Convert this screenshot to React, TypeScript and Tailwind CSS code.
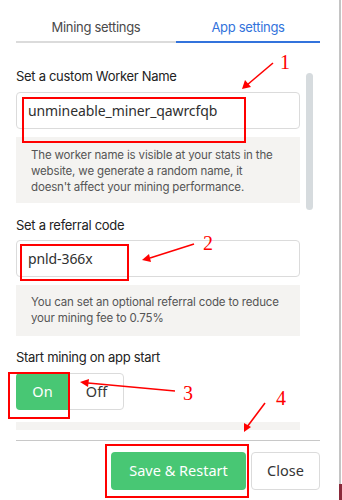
import { Fragment } from "react";

const labelFont = { fontFamily: "Inter, 'Noto Sans', sans-serif" };

const Label = ({ text, className }: { text: string; className: string }) => (
  <div className={`text-[13px] leading-[20px] tracking-[-0.3px] text-[#222] ${className}`}>
    {text}
  </div>
);

const Field = ({ value, className }: { value: string; className: string }) => (
  <div
    className={`h-[37px] rounded-[4px] border border-[#dbdbdb] bg-white flex items-center pl-[11px] text-[14px] tracking-[-0.1px] text-[#2f2f2f] font-['Noto_Sans',sans-serif] ${className}`}
  >
    {value}
  </div>
);

const Help = ({ lines, className }: { lines: string[]; className: string }) => (
  <div
    className={`bg-[#f4f3f1] pl-[15px] pr-1 text-[11.5px] leading-[16px] tracking-[-0.15px] whitespace-nowrap text-[#555] ${className}`}
  >
    {lines.map((l, i) => (
      <Fragment key={i}>
        {l}
        {i < lines.length - 1 && <br />}
      </Fragment>
    ))}
  </div>
);

const Annotations = () => (
  <div className="absolute inset-0 pointer-events-none">
    <div className="absolute left-[22px] top-[97px] w-[224px] h-[46px] border-2 border-[#ff0000]" />
    <div className="absolute left-[20px] top-[244px] w-[109px] h-[37px] border-2 border-[#ff0000]" />
    <div className="absolute left-[8px] top-[372px] w-[62px] h-[47px] border-2 border-[#ff0000]" />
    <div className="absolute left-[105px] top-[444px] w-[144px] h-[54px] border-2 border-[#ff0000]" />
    <svg className="absolute inset-0" width="342" height="500">
      <g stroke="#ff0000" strokeWidth="1.6" fill="#ff0000">
        <line x1="273" y1="63" x2="247" y2="85" />
        <polygon points="242,89 245,80 251,87" stroke="none" />
        <line x1="194" y1="244" x2="150" y2="258" />
        <polygon points="142,260 149,254 151,262" stroke="none" />
        <line x1="175" y1="391" x2="88" y2="383" />
        <polygon points="80,382 89,379 88,387" stroke="none" />
        <line x1="265" y1="403" x2="247" y2="427" />
        <polygon points="244,432 244,423 251,427" stroke="none" />
      </g>
    </svg>
    <div className="absolute text-[#ff0000] text-[20px] leading-none font-['Liberation_Serif',serif]">
      <span className="absolute left-[280px] top-[52px]">1</span>
      <span className="absolute left-[203px] top-[233px]">2</span>
      <span className="absolute left-[183px] top-[383px]">3</span>
      <span className="absolute left-[276px] top-[388px]">4</span>
    </div>
  </div>
);

export default function App() {
  return (
    <div className="relative w-[342px] h-[500px] bg-white overflow-hidden">
      <div className="w-[341px] h-full border-r-2 border-[#c4c4c4] flex flex-col pl-4" style={labelFont}>
        {/* tabs */}
        <div className="flex w-[304px] mt-[14px] text-[13px] tracking-[-0.3px]">
          <div className="w-[160px] h-[29px] flex items-center justify-center border-b-2 border-[#dbdbdb] text-[#4a4a4a]">
            Mining settings
          </div>
          <div className="flex-1 h-[29px] flex items-center justify-center border-b-2 border-[#3273dc] text-[#3273dc]">
            App settings
          </div>
        </div>

        {/* scroll area */}
        <div className="flex h-[387px] overflow-hidden">
          <div className="w-[284px] flex flex-col">
            <Label text="Set a custom Worker Name" className="mt-[23px]" />
            <Field value="unmineable_miner_qawrcfqb" className="mt-[6px]" />
            <Help
              className="mt-[8px] py-[10px] h-[66px]"
              lines={[
                "The worker name is visible at your stats in the",
                "website, we generate a random name, it",
                "doesn't affect your mining performance.",
              ]}
            />
            <Label text="Set a referral code" className="mt-[12px]" />
            <Field value="pnld-366x" className="mt-[5px]" />
            <Help
              className="mt-[8px] py-[9px] h-[51px]"
              lines={[
                "You can set an optional referral code to reduce",
                "your mining fee to 0.75%",
              ]}
            />
            <Label text="Start mining on app start" className="mt-[11px]" />
            <div className="flex mt-[6px] text-[14.5px] font-['Noto_Sans',sans-serif]">
              <div className="w-[53px] h-[37px] flex items-center justify-center rounded-l-[4px] bg-[#48c774] text-white">
                On
              </div>
              <div className="w-[55px] h-[37px] flex items-center justify-center rounded-r-[4px] border border-[#dbdbdb] text-[#363636]">
                Off
              </div>
            </div>
            <div className="mt-[12px] h-[8px] bg-[#f4f3f1]" />
          </div>
          <div className="ml-[6px] mt-[30px] w-[7px] h-[137px] rounded-full bg-[#d6dbde]" />
        </div>

        {/* footer */}
        <div className="w-[304px] mt-[10px] border-t border-[#c8c8c8] flex justify-end gap-[5px] pt-[11px] text-[14.5px] font-['Noto_Sans',sans-serif]">
          <div className="w-[135px] h-[38px] rounded-[4px] bg-[#48c774] text-white flex items-center justify-center">
            Save &amp; Restart
          </div>
          <div className="w-[69px] h-[38px] rounded-[4px] border border-[#dbdbdb] text-[#363636] flex items-center justify-center">
            Close
          </div>
        </div>
      </div>
      <div className="absolute right-0 top-[484px] w-[3px] h-[16px] bg-[#8a2a3a]" />
      <Annotations />
    </div>
  );
}
